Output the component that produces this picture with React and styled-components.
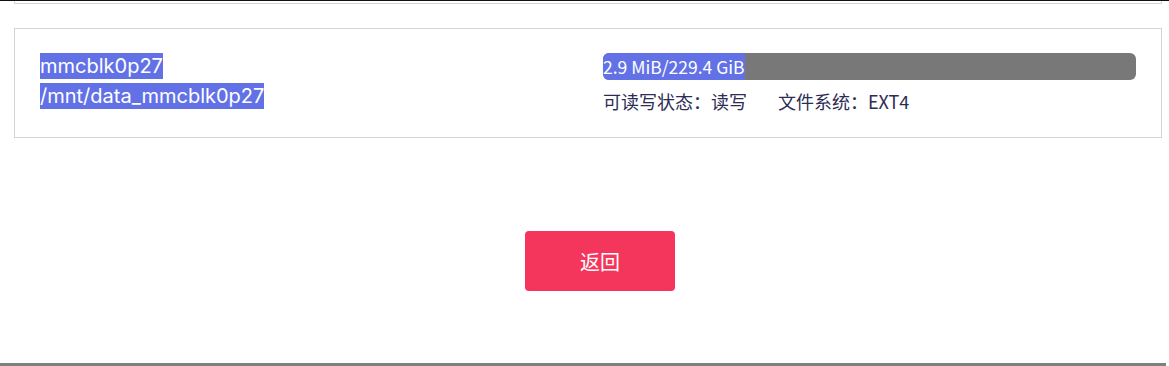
import React from 'react'
import styled, { createGlobalStyle } from 'styled-components'

const GlobalStyle = createGlobalStyle`
  html, body {
    margin: 0;
    padding: 0;
    background: #fff;
  }
  body {
    font-family: Inter, "Noto Sans CJK SC", sans-serif;
  }
`

const Page = styled.div`
  min-height: 100vh;
  display: flex;
  flex-direction: column;
  border-top: 1px solid #111;
  box-sizing: border-box;
`

const Content = styled.div`
  flex: 1;
  padding: 0 7px 0 14px;
`

const PrevCard = styled.div`
  height: 2px;
  border: 1px solid #d4d4d4;
  border-top: none;
`

const Card = styled.div`
  margin-top: 24px;
  border: 1px solid #d4d4d4;
  padding: 24px 25px 26px;
  display: grid;
  grid-template-columns: 563px 1fr;
`

const Names = styled.div`
  display: flex;
  flex-direction: column;
  align-items: flex-start;
  gap: 4px;
`

const Sel = styled.span`
  display: inline-block;
  background: #6272e6;
  color: #fff;
  font-size: ${p => p.size || 20}px;
  line-height: ${p => p.lh || 26}px;
  font-family: ${p => p.font || 'Inter, sans-serif'};
  letter-spacing: ${p => p.ls || 0}px;
`

const Info = styled.div`
  display: flex;
  flex-direction: column;
  gap: 11px;
`

const Bar = styled.div`
  height: 27px;
  background: #787878;
  border-radius: 6px;
  display: flex;
  align-items: center;
  overflow: hidden;
`

const Meta = styled.div`
  display: flex;
  gap: 31px;
  font-family: "Noto Sans CJK SC", sans-serif;
  font-size: 18px;
  line-height: 20px;
  color: #2c2c54;
`

const Actions = styled.div`
  display: flex;
  justify-content: center;
  padding: 93px 0 0 24px;
`

const Button = styled.button`
  width: 150px;
  height: 60px;
  border: none;
  border-radius: 4px;
  background: #f5365c;
  color: #fff;
  font-family: "Noto Sans CJK SC", sans-serif;
  font-size: 20px;
  cursor: pointer;
`

const BottomBar = styled.div`
  height: 3px;
  background: #808080;
  margin-right: 3px;
`

export default function App() {
  return (
    <>
      <GlobalStyle />
      <Page>
        <Content>
          <PrevCard />
          <Card>
            <Names>
              <Sel>mmcblk0p27</Sel>
              <Sel>/mnt/data_mmcblk0p27</Sel>
            </Names>
            <Info>
              <Bar>
                <Sel size={17.5} lh={27} font={'"Noto Sans CJK SC", sans-serif'}>2.9 MiB/229.4 GiB</Sel>
              </Bar>
              <Meta>
                <span>可读写状态：读写</span>
                <span>文件系统：EXT4</span>
              </Meta>
            </Info>
          </Card>
          <Actions>
            <Button>返回</Button>
          </Actions>
        </Content>
        <BottomBar />
      </Page>
    </>
  )
}
